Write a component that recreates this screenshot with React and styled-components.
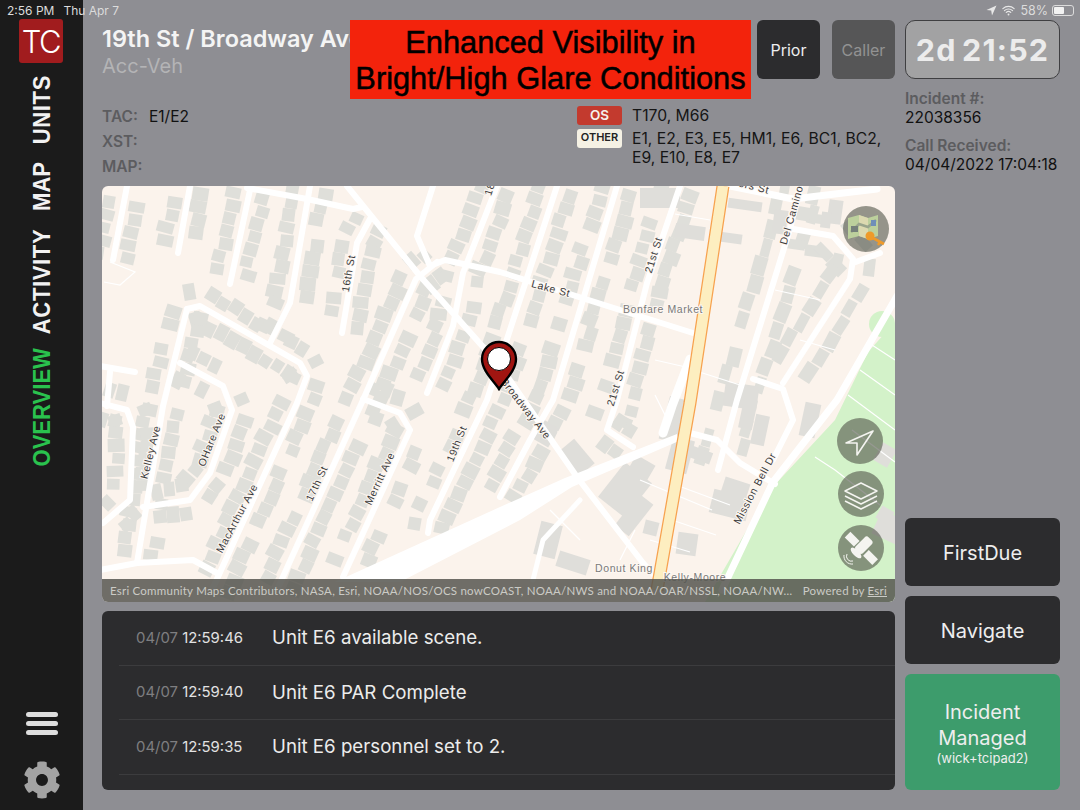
import React from 'react';
import styled, { createGlobalStyle } from 'styled-components';
import { FaCog } from 'react-icons/fa';
import { IoWifi } from 'react-icons/io5';

const UI_FONT = '"Inter", "Liberation Sans", sans-serif';

const Global = createGlobalStyle`
    html, body { margin: 0; padding: 0; background: #8e8e93; }
    * { box-sizing: border-box; }
`;

const Screen = styled.div`
    position: relative;
    display: flex;
    width: 1080px;
    height: 810px;
    overflow: hidden;
    background: #8e8e93;
    font-family: ${UI_FONT};
`;

const StatusBar = styled.div`
    position: absolute;
    top: 3px;
    left: 7px;
    right: 5px;
    height: 15px;
    display: flex;
    align-items: center;
    font-size: 12px;
    color: #dcdcdc;
    z-index: 5;
`;
const StatusText = styled.span`
    margin-right: ${({ $gap }) => $gap || 0}px;
    white-space: nowrap;
`;
const StatusRight = styled.div`
    margin-left: auto;
    display: flex;
    align-items: center;
    gap: 4px;
    font-size: 12.5px;
`;
const Battery = styled.div`
    width: 22px;
    height: 11px;
    border: 1px solid #dcdcdc;
    border-radius: 3px;
    padding: 1px;
    margin-right: 1px;
    &::before {
        content: '';
        display: block;
        width: 58%;
        height: 100%;
        background: #f2f2f2;
        border-radius: 1px;
    }
`;

const Sidebar = styled.nav`
    width: 83px;
    flex: none;
    height: 100%;
    background: #1b1b1b;
    display: flex;
    flex-direction: column;
    align-items: center;
    padding: 19px 0 11px 0;
`;
const Logo = styled.div`
    width: 44px;
    height: 44px;
    margin-right: 1px;
    background: #a11c1e;
    border-radius: 3px;
    color: #fff;
    font-size: 31px;
    font-weight: 300;
    letter-spacing: -1.5px;
    display: flex;
    align-items: center;
    justify-content: center;
`;
const Tabs = styled.div`
    writing-mode: vertical-rl;
    transform: rotate(180deg) scaleY(0.9);
    display: flex;
    align-items: center;
    gap: 20px;
    margin-top: -10px;
`;
const Tab = styled.div`
    font-family: "Liberation Sans", sans-serif;
    font-size: 24.5px;
    font-weight: 700;
    line-height: 26px;
    letter-spacing: ${({ $track }) => $track || 0}px;
    margin-bottom: ${({ $active }) => ($active ? -5 : 0)}px;
    white-space: nowrap;
    color: ${({ $active }) => ($active ? '#2ac24e' : '#f2f2f2')};
`;
const Burger = styled.div`
    margin-top: auto;
    width: 32px;
    display: flex;
    flex-direction: column;
    gap: 4px;
`;
const BurgerBar = styled.span`
    height: 5px;
    border-radius: 2.5px;
    background: #dedede;
`;
const Gear = styled.div`
    margin-top: 26px;
    height: 38px;
    color: #a3a3a3;
    font-size: 38px;
    line-height: 38px;
`;

const Main = styled.main`
    flex: 1;
    display: grid;
    grid-template-columns: 793px 155px;
    column-gap: 10px;
    padding: 20px 0 20px 19px;
`;
const Center = styled.div`
    display: flex;
    flex-direction: column;
    min-width: 0;
`;
const Header = styled.div`
    display: flex;
    height: 59px;
    gap: 12px;
`;
const TitleBlock = styled.div`
    flex: 1;
    min-width: 0;
    padding-top: 4px;
`;
const Title = styled.div`
    font-size: 23.5px;
    line-height: 29px;
    font-weight: 600;
    color: #f4f4f4;
    white-space: nowrap;
`;
const Subtitle = styled.div`
    font-size: 20px;
    line-height: 26px;
    color: #b4b4b6;
`;
const HeadButton = styled.div`
    width: 63px;
    height: 59px;
    border-radius: 6px;
    background: ${({ $off }) => ($off ? '#565657' : '#2c2c2e')};
    color: ${({ $off }) => ($off ? '#929292' : '#eeeeee')};
    font-size: 16px;
    display: flex;
    align-items: center;
    justify-content: center;
`;
const Banner = styled.div`
    position: absolute;
    left: 350px;
    top: 20px;
    width: 401px;
    height: 79px;
    z-index: 3;
    background: #f3230c;
    color: #000;
    font-family: "Liberation Sans", sans-serif;
    font-size: 30.8px;
    line-height: 36px;
    -webkit-text-stroke: 0.5px #000;
    text-align: center;
    padding-top: 5px;
    white-space: nowrap;
`;

const InfoRow = styled.div`
    height: 107px;
    padding-top: 25px;
    display: flex;
    align-items: flex-start;
`;
const Dispatch = styled.div`
    width: 475px;
    flex: none;
    display: flex;
    flex-direction: column;
`;
const DispatchRow = styled.div`
    height: 25px;
    display: flex;
    align-items: center;
    font-size: 15.5px;
`;
const Label = styled.span`
    color: #5c5c5f;
    font-weight: 600;
    width: 47px;
`;
const Value = styled.span`
    color: #111;
`;
const Units = styled.div`
    display: grid;
    grid-template-columns: 45px 1fr;
    column-gap: 10px;
    row-gap: 3px;
    padding-top: 2px;
    font-size: 15.7px;
    line-height: 19.5px;
    color: #151515;
`;
const Badge = styled.div`
    height: 19px;
    border-radius: 3px;
    display: flex;
    align-items: center;
    justify-content: center;
    font-weight: 600;
    font-size: ${({ $light }) => ($light ? '11px' : '13.5px')};
    background: ${({ $light }) => ($light ? '#f5f1e4' : '#c33a2e')};
    color: ${({ $light }) => ($light ? '#222' : '#f6f0ea')};
`;

const MapFrame = styled.div`
    position: relative;
    height: 416px;
    border-radius: 6px;
    overflow: hidden;
    background: #fbf3ec;
`;
const MapArt = styled.svg`
    display: block;
    width: 793px;
    height: 416px;
`;
const MapLabel = styled.text`
    font-family: "Liberation Sans", sans-serif;
    font-size: 10.5px;
    letter-spacing: 0.6px;
    fill: ${({ $poi }) => ($poi ? '#7a7a7a' : '#3c3c3c')};
    stroke: #fdf7f2;
    stroke-width: 2px;
    paint-order: stroke;
    text-anchor: middle;
`;
const MapButton = styled.div`
    position: absolute;
    right: ${({ $right }) => $right}px;
    top: ${({ $top }) => $top}px;
    width: 46px;
    height: 46px;
    border-radius: 50%;
    background: rgba(86, 88, 78, 0.62);
    display: flex;
    align-items: center;
    justify-content: center;
`;
const Attribution = styled.div`
    position: absolute;
    left: 0;
    right: 0;
    bottom: 0;
    height: 23px;
    display: flex;
    justify-content: space-between;
    align-items: center;
    padding: 0 8px;
    background: rgba(84, 83, 77, 0.84);
    color: #cbcbc6;
    font-family: "Lato", sans-serif;
    font-size: 11.5px;
    letter-spacing: 0.23px;
    white-space: nowrap;
`;
const EsriLink = styled.span`
    text-decoration: underline;
`;

const Feed = styled.div`
    margin-top: 9px;
    height: 179px;
    border-radius: 6px;
    background: #2c2c2e;
    padding-left: 17px;
`;
const FeedRow = styled.div`
    height: 54.5px;
    display: flex;
    align-items: center;
    border-bottom: 1px solid #3c3c3e;
    padding-left: 17px;
`;
const FeedStamp = styled.div`
    width: 136px;
    flex: none;
    font-size: 14.9px;
    color: #e2e2e2;
    white-space: nowrap;
`;
const FeedDate = styled.span`
    color: #7e7e80;
`;
const FeedText = styled.div`
    font-size: 18.7px;
    color: #ececec;
`;

const Side = styled.aside`
    display: flex;
    flex-direction: column;
`;
const Timer = styled.div`
    height: 59px;
    border: 1.5px solid #3f3f41;
    border-radius: 10px;
    background: #a2a2a3;
    color: #ececec;
    font-size: 30.5px;
    font-weight: 700;
    letter-spacing: 1.2px;
    word-spacing: -3px;
    display: flex;
    align-items: center;
    justify-content: center;
    white-space: nowrap;
`;
const Fact = styled.div`
    margin-top: ${({ $top }) => $top}px;
    font-size: 15.5px;
    line-height: 18.5px;
    color: #111;
    white-space: nowrap;
`;
const FactLabel = styled.div`
    color: #5c5c5f;
    font-weight: 600;
`;
const ActionStack = styled.div`
    margin-top: auto;
    display: flex;
    flex-direction: column;
    gap: 10px;
`;
const Action = styled.div`
    height: ${({ $h }) => $h}px;
    border-radius: 6px;
    background: ${({ $green }) => ($green ? '#3d9c6c' : '#2c2c2e')};
    color: #eeeeee;
    font-size: 20px;
    line-height: 26px;
    padding-top: ${({ $green }) => ($green ? 0 : 2)}px;
    display: flex;
    flex-direction: column;
    align-items: center;
    justify-content: center;
    text-align: center;
`;
const ActionNote = styled.div`
    font-size: 13px;
    line-height: 15px;
`;

// map data, all points in page pixels (the svg viewBox starts at the map's corner)
const MAP_X = 102;
const MAP_Y = 186;

const STD = [12, 15, 14.5, 13];
const BIG = [18, 12, 17, 19];

const roads = [
    { p: [[127, 186], [113, 260]], w: 6, b: STD },
    { p: [[190, 186], [178, 253]], w: 6, b: STD },
    { p: [[250, 190], [230, 284]], w: 6, b: STD },
    { p: [[310, 186], [290, 303], [270, 343]], w: 6, b: STD },
    { p: [[370, 219], [357, 243], [342, 333]], w: 6, b: STD },
    { p: [[247, 188], [307, 199], [353, 209], [362, 207]], w: 6 },
    { p: [[347, 186], [420, 276], [500, 366], [577, 477], [643, 563], [668, 590]], w: 6 },
    { p: [[433, 186], [417, 236], [430, 266], [445, 260], [500, 272], [693, 333]], w: 6 },
    { p: [[437, 262], [416, 279], [363, 400], [277, 590]], w: 6, b: STD },
    { p: [[187, 309], [200, 306], [300, 363], [307, 376], [297, 403], [212, 590]], w: 6, b: STD },
    { p: [[187, 309], [163, 406], [137, 563]], w: 6, b: STD },
    { p: [[100, 570], [137, 563], [193, 560], [217, 573]], w: 6 },
    { p: [[180, 363], [223, 386], [232, 410], [210, 473], [190, 500], [143, 507]], w: 6, b: STD },
    { p: [[100, 366], [135, 372]], w: 6 },
    { p: [[110, 372], [107, 406]], w: 6 },
    { p: [[100, 403], [127, 410], [133, 427], [130, 500], [103, 523]], w: 6, b: STD },
    { p: [[497, 186], [463, 273], [453, 326], [427, 393]], w: 6, b: STD },
    { p: [[363, 399], [400, 413], [410, 430], [343, 577]], w: 6, b: STD },
    { p: [[557, 186], [507, 339], [487, 400], [430, 520], [428, 533]], w: 6, b: STD },
    { p: [[617, 186], [553, 400], [530, 440], [500, 497]], w: 6, b: STD },
    { p: [[680, 186], [647, 283], [617, 400], [607, 430], [633, 447]], w: 6, b: STD },
    { p: [[730, 186], [793, 199], [877, 189]], w: 7 },
    { p: [[800, 186], [790, 229], [737, 400], [718, 470]], w: 6, b: BIG },
    { p: [[793, 229], [833, 236], [853, 259], [850, 279], [783, 383]], w: 6, b: BIG },
    { p: [[853, 263], [880, 253]], w: 6 },
    { p: [[753, 379], [783, 389], [793, 420], [773, 460]], w: 6 },
    { p: [[690, 433], [717, 440], [740, 463], [775, 484]], w: 6 },
    { p: [[690, 359], [672, 406], [663, 433]], w: 9 },
    { p: [[580, 500], [543, 540], [533, 580]], w: 5 },
    { p: [[897, 296], [837, 400], [773, 482], [722, 590]], w: 7 },
];

const thinLines = [
    'M675 214 L710 220', 'M690 369 L740 385', 'M655 360 L690 368', 'M655 395 L665 415',
    'M650 540 L690 552', 'M672 520 L716 535', 'M676 485 L730 505', 'M640 480 L712 510',
    'M550 510 L580 540', 'M635 530 L620 560', 'M775 290 L820 300', 'M800 340 L835 350',
    'M110 262 L135 272 L120 285 L104 282',
];

const lots = [
    [675, 420, 22, 44, 15], [680, 455, 22, 34, 15], [638, 474, 22, 32, 30], [625, 490, 34, 44, 38],
    [634, 515, 18, 40, 38], [651, 528, 14, 14, 14], [687, 544, 20, 22, 8], [698, 454, 28, 12, 20],
    [576, 458, 22, 32, -40], [545, 433, 20, 22, 30], [735, 490, 26, 20, 18], [730, 505, 38, 24, 14],
    [548, 540, 22, 34, 14], [573, 563, 32, 16, 18], [660, 198, 40, 20, 0], [690, 232, 30, 14, 8],
    [730, 238, 24, 10, 8], [745, 205, 34, 10, 8], [780, 222, 14, 24, 8], [835, 212, 14, 24, 8],
    [826, 220, 10, 16, 8], [741, 396, 34, 24, 8], [810, 420, 16, 34, 12], [748, 414, 14, 30, 12],
    [760, 430, 14, 30, 12], [885, 455, 16, 20, 30], [895, 530, 40, 26, 25], [885, 515, 14, 14, 30],
];

const segments = (pts) => pts.slice(1).map((q, i) => [pts[i], q]);

// rows of houses along both sides of a street, seeded so the picture stays the same
const buildHouses = () => {
    let seed = 11;
    const rnd = () => {
        seed = (seed * 16807) % 2147483647;
        return seed / 2147483647;
    };
    const out = [];
    roads.filter((r) => r.b).forEach((road) => {
        const [w, h, off, step] = road.b;
        segments(road.p).forEach(([a, b]) => {
            const dx = b[0] - a[0];
            const dy = b[1] - a[1];
            const len = Math.hypot(dx, dy);
            const ux = dx / len;
            const uy = dy / len;
            const deg = (Math.atan2(dy, dx) * 180) / Math.PI;
            [-1, 1].forEach((side) => {
                for (let t = 6; t < len - 4; t += step) {
                    if (rnd() < 0.08) continue;
                    const d = off + rnd() * 6 - 3;
                    const cx = a[0] + ux * t - uy * d * side;
                    const cy = a[1] + uy * t + ux * d * side;
                    const jw = w + rnd() * 3 - 1.5;
                    const jh = h + rnd() * 5 - 3;
                    out.push([cx, cy, jw, jh, deg + rnd() * 10 - 5]);
                }
            });
        });
    });
    return out;
};

const houses = buildHouses();
const inPark = (x, y) => y > 345 && x > 875 - (y - 345) * 0.62;

const linePoints = (pts) => pts.map((q) => q.join(',')).join(' ');

const labels = [
    ['16th St', 352, 274, -80],
    ['Lake St', 550, 292, 15],
    ['21st St', 657, 256, -73],
    ['21st St', 619, 389, -73],
    ['Del Camino', 795, 216, -74],
    ['ers St', 753, 190, 14],
    ['18', 493, 190, -72],
    ['Broadway Ave', 523, 411, 52],
    ['19th St', 460, 445, -68],
    ['Merritt Ave', 383, 480, -65],
    ['17th St', 320, 485, -65],
    ['MacArthur Ave', 240, 520, -62],
    ['OHare Ave', 215, 441, -68],
    ['Kelley Ave', 154, 453, -76],
    ['Mission Bell Dr', 758, 490, -62],
];

const StreetMap = () => (
    <MapArt viewBox={`${MAP_X} ${MAP_Y} 793 416`}>
        <polygon points="895,322 868,352 835,420 770,490 705,602 895,602" fill="#d3f2c9" />
        <circle cx="882" cy="324" r="13" fill="#d3f2c9" />
        {houses.filter(([x, y]) => !inPark(x, y)).map(([x, y, w, h, deg], i) => (
            <rect key={i} x={x - w / 2} y={y - h / 2} width={w} height={h} fill="#dfdfda"
                transform={`rotate(${deg.toFixed(1)} ${x.toFixed(1)} ${y.toFixed(1)})`} />
        ))}
        {lots.map(([x, y, w, h, deg], i) => (
            <rect key={i} x={x - w / 2} y={y - h / 2} width={w} height={h} fill="#dfdeda"
                transform={`rotate(${deg} ${x} ${y})`} />
        ))}
        <g stroke="#ffffff" fill="none" strokeWidth="1.2">
            {thinLines.map((d, i) => <path key={i} d={d} />)}
            <path d="M815 457 L835 470 L880 505 M852 430 L895 462 M872 345 L895 360 M860 370 L895 395 M848 395 L895 430" />
        </g>
        <g fill="none" stroke="#ffffff" strokeLinecap="round" strokeLinejoin="round">
            {roads.map((r, i) => <polyline key={i} points={linePoints(r.p)} strokeWidth={r.w} />)}
        </g>
        <polygon points="335,582 500,507 565,478 677,434 679,441 572,487 520,520 400,582" fill="#ffffff" />
        <polyline points="723,186 690,403 657,590" fill="none" stroke="#f7a24f" strokeWidth="13" />
        <polyline points="723,186 690,403 657,590" fill="none" stroke="#fdeec0" strokeWidth="10.5" />
        {labels.map(([text, x, y, deg]) => (
            <MapLabel key={text + x} x={x} y={y} transform={`rotate(${deg} ${x} ${y})`}>{text}</MapLabel>
        ))}
        <MapLabel $poi x="663" y="313">Bonfare Market</MapLabel>
        <MapLabel $poi x="624" y="572">Donut King</MapLabel>
        <MapLabel $poi x="695" y="581">Kelly-Moore</MapLabel>
        <g transform="translate(499 362)">
            <path d="M0 27 C-5 19 -17 9 -17 -3 A17 17 0 1 1 17 -3 C17 9 5 19 0 27 Z" fill="#a01511" stroke="#000" strokeWidth="2.4" />
            <circle cx="0" cy="-3" r="11.5" fill="#fff" stroke="#000" strokeWidth="1" />
        </g>
    </MapArt>
);

const MapKeyIcon = () => (
    <svg width="46" height="46" viewBox="0 0 46 46">
        <polygon points="5,12 16,9 25,12 35,9 35,30 25,33 16,30 5,33" fill="#bcd09c" />
        <polygon points="16,9 25,12 25,33 16,30" fill="#dcd9b0" />
        <path d="M8 26 L16 18 L25 21 L33 14" stroke="#9aa58c" strokeWidth="2.5" fill="none" />
        <rect x="8" y="20" width="7" height="6" fill="#75807a" />
        <rect x="28" y="14" width="5" height="6" fill="#6f8fb8" />
        <circle cx="27" cy="30" r="4.5" fill="#ee9a2a" />
        <path d="M30 32 L41 38 M37 36 L35 39" stroke="#ee9a2a" strokeWidth="2.6" />
    </svg>
);

const NavIcon = () => (
    <svg width="46" height="46" viewBox="-23 -23 46 46">
        <path d="M13 -10 L-14 2 L-3 2 L-3 14 Z" fill="none" stroke="#f4f4f0" strokeWidth="1.6" strokeLinejoin="round" />
    </svg>
);

const LayersIcon = () => (
    <svg width="46" height="46" viewBox="-23 -23 46 46">
        <g fill="none" stroke="#f4f4f0" strokeWidth="1.5" strokeLinejoin="round">
            <path d="M0 -11 L16 -3 L0 5 L-16 -3 Z" />
            <path d="M-16 2 L0 10 L16 2" />
            <path d="M-16 7 L0 15 L16 7" />
        </g>
    </svg>
);

const SatelliteIcon = () => (
    <svg width="46" height="46" viewBox="-23 -23 46 46">
        <g transform="rotate(-45)" fill="#f4f4f0">
            <rect x="-4" y="-19" width="8" height="13" />
            <rect x="-4" y="7" width="8" height="13" />
            <rect x="-5" y="-5" width="18" height="10" rx="3" />
            <ellipse cx="-7" cy="0" rx="3" ry="7" />
        </g>
        <path d="M-14 6 A5 5 0 0 0 -8 13 M-17 7 A8 8 0 0 0 -8 16" fill="none" stroke="#f4f4f0" strokeWidth="1" />
    </svg>
);

const feed = [
    ['12:59:46', 'Unit E6 available scene.'],
    ['12:59:40', 'Unit E6 PAR Complete'],
    ['12:59:35', 'Unit E6 personnel set to 2.'],
];

export default function App() {
    return (
        <Screen>
            <Global />
            <StatusBar>
                <StatusText $gap={9}>2:56 PM</StatusText>
                <StatusText>Thu Apr 7</StatusText>
                <StatusRight>
                    <svg width="11" height="11" viewBox="0 0 11 11"><path d="M10.5 0.5 L0.5 5 L5.2 5.6 L6 10.5 Z" fill="#e8e8e8" /></svg>
                    <IoWifi size={15} color="#e8e8e8" />
                    <StatusText>58%</StatusText>
                    <Battery />
                </StatusRight>
            </StatusBar>
            <Banner>Enhanced Visibility in<br />Bright/High Glare Conditions</Banner>
            <Sidebar>
                <Logo>TC</Logo>
                <Tabs>
                    <Tab $active>OVERVIEW</Tab>
                    <Tab $track={0.7}>ACTIVITY</Tab>
                    <Tab>MAP</Tab>
                    <Tab $track={0.7}>UNITS</Tab>
                </Tabs>
                <Burger><BurgerBar /><BurgerBar /><BurgerBar /></Burger>
                <Gear><FaCog /></Gear>
            </Sidebar>
            <Main>
                <Center>
                    <Header>
                        <TitleBlock>
                            <Title>19th St / Broadway Ave</Title>
                            <Subtitle>Acc-Veh</Subtitle>
                        </TitleBlock>
                        <HeadButton>Prior</HeadButton>
                        <HeadButton $off>Caller</HeadButton>
                    </Header>
                    <InfoRow>
                        <Dispatch>
                            <DispatchRow><Label>TAC:</Label><Value>E1/E2</Value></DispatchRow>
                            <DispatchRow><Label>XST:</Label></DispatchRow>
                            <DispatchRow><Label>MAP:</Label></DispatchRow>
                        </Dispatch>
                        <Units>
                            <Badge>OS</Badge>
                            <div>T170, M66</div>
                            <Badge $light>OTHER</Badge>
                            <div>E1, E2, E3, E5, HM1, E6, BC1, BC2,<br />E9, E10, E8, E7</div>
                        </Units>
                    </InfoRow>
                    <MapFrame>
                        <StreetMap />
                        <MapButton $right={6} $top={20}><MapKeyIcon /></MapButton>
                        <MapButton $right={12} $top={232}><NavIcon /></MapButton>
                        <MapButton $right={11} $top={285}><LayersIcon /></MapButton>
                        <MapButton $right={11} $top={339}><SatelliteIcon /></MapButton>
                        <Attribution>
                            <span>Esri Community Maps Contributors, NASA, Esri, NOAA/NOS/OCS nowCOAST, NOAA/NWS and NOAA/OAR/NSSL, NOAA/NW…</span>
                            <span>Powered by <EsriLink>Esri</EsriLink></span>
                        </Attribution>
                    </MapFrame>
                    <Feed>
                        {feed.map(([time, text]) => (
                            <FeedRow key={time}>
                                <FeedStamp><FeedDate>04/07</FeedDate> {time}</FeedStamp>
                                <FeedText>{text}</FeedText>
                            </FeedRow>
                        ))}
                    </Feed>
                </Center>
                <Side>
                    <Timer>2d 21:52</Timer>
                    <Fact $top={11}>
                        <FactLabel>Incident #:</FactLabel>
                        22038356
                    </Fact>
                    <Fact $top={10}>
                        <FactLabel>Call Received:</FactLabel>
                        04/04/2022 17:04:18
                    </Fact>
                    <ActionStack>
                        <Action $h={68}>FirstDue</Action>
                        <Action $h={68}>Navigate</Action>
                        <Action $h={116} $green>
                            Incident<br />Managed
                            <ActionNote>(wick+tcipad2)</ActionNote>
                        </Action>
                    </ActionStack>
                </Side>
            </Main>
        </Screen>
    );
}
